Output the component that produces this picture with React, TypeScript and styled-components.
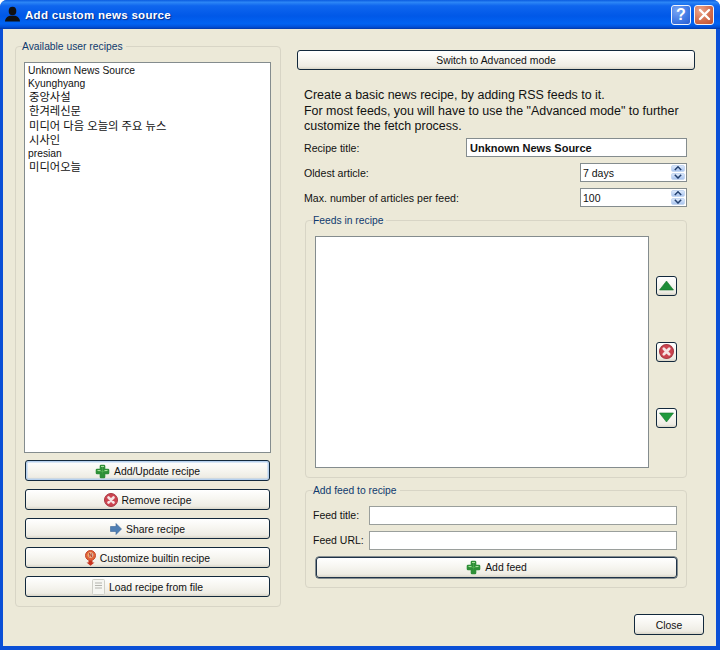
import React from "react";
import styled, { createGlobalStyle } from "styled-components";

const GlobalStyle = createGlobalStyle`
  html, body { margin: 0; padding: 0; background: #fff; }
  body { font-family: "Liberation Sans", Arial, sans-serif; font-size: 10.5px; color: #111; }
  * { box-sizing: border-box; }
`;

const Window = styled.div`
  width: 720px;
  height: 650px;
  display: flex;
  flex-direction: column;
  background: #0a4fd6;
  border-radius: 7px 7px 0 0;
  overflow: hidden;
`;

const TitleBar = styled.div`
  height: 29px;
  flex: none;
  display: flex;
  align-items: center;
  padding: 0 6px 0 4px;
  background: linear-gradient(180deg, #0a5be0 0%, #2c86f6 8%, #0f66ee 20%, #0058e8 55%, #0163f2 82%, #0150d8 93%, #0239a8 100%);
`;

const TitleText = styled.span`
  margin-left: 4px;
  flex: 1;
  color: #fff;
  font-weight: 700;
  font-size: 11.5px;
  letter-spacing: 0.3px;
  text-shadow: 1px 1px 1px #0b2f88;
`;

const CaptionButton = styled.div<{ $close?: boolean }>`
  width: 20px;
  height: 20px;
  margin-left: 3px;
  display: flex;
  align-items: center;
  justify-content: center;
  border: 1px solid #f2f5fc;
  border-radius: 3px;
  background: ${(p) =>
    p.$close
      ? "radial-gradient(circle at 30% 25%, #eda58c, #d06a4a 60%, #bf5030)"
      : "radial-gradient(circle at 30% 25%, #7aa6f4, #3f78e4 60%, #2a5cd0)"};
`;

const HelpMark = styled.span`
  color: #fff;
  font-size: 16px;
  font-weight: 700;
  line-height: 1;
`;

const Client = styled.div`
  flex: 1;
  margin: 0 4px 4px 3px;
  padding: 11px 12px 11px 12px;
  background: #ece9d8;
  display: grid;
  grid-template-columns: 266px 1fr;
  column-gap: 16px;
  min-height: 0;
`;

const Group = styled.fieldset<{ $height?: number; $left?: number }>`
  margin: 0;
  min-width: 0;
  padding: 9px 9px 9px ${(p) => p.$left ?? 8}px;
  border: 1px solid #d8d5c6;
  border-radius: 4px;
  display: flex;
  flex-direction: column;
  ${(p) => (p.$height ? `height: ${p.$height}px; flex: none;` : "")}
`;

const Legend = styled.legend<{ $offset?: number }>`
  padding: 0 3px 0 0;
  margin-left: ${(p) => p.$offset ?? -2}px;
  height: 13px;
  line-height: 13px;
  color: #0f3a6e;
  font-size: 10.3px;
`;

const LeftGroup = styled(Group)`
  margin-bottom: 28px;
`;

const ListBox = styled.div`
  flex: 1;
  min-width: 0;
  background: #fff;
  border: 1px solid #848c8e;
  padding: 1px 3px;
`;

const ListItem = styled.div<{ $ko?: boolean }>`
  height: ${(p) => (p.$ko ? 14.3 : 13)}px;
  line-height: ${(p) => (p.$ko ? 14.3 : 13)}px;
  padding-left: ${(p) => (p.$ko ? 1 : 0)}px;
  font-family: "Liberation Sans", "Noto Sans CJK KR", sans-serif;
  font-size: ${(p) => (p.$ko ? 11.3 : 10.3)}px;
  white-space: nowrap;
`;

const LeftButtons = styled.div`
  display: flex;
  flex-direction: column;
  gap: 8px;
  margin: 7px 1px 0;
`;

const Button = styled.button<{ $focus?: boolean; $strong?: boolean }>`
  height: 21px;
  padding: 1px 0 0;
  display: flex;
  align-items: center;
  justify-content: center;
  gap: 4px;
  font-family: inherit;
  font-size: 10.4px;
  color: #111;
  border: 1px solid ${(p) => (p.$strong ? "#1f3348" : "#12283c")};
  border-radius: 3px;
  background: linear-gradient(180deg, #ffffff 0%, #f7f6f1 45%, #eeece4 85%, #d9d5c8 100%);
  box-shadow: ${(p) =>
    p.$focus
      ? "inset 0 0 0 1.5px #b6d0ee"
      : p.$strong
        ? "0 0 0 0.5px #1f3348"
        : "none"};
`;

const RightColumn = styled.div`
  display: flex;
  flex-direction: column;
  padding-top: 10px;
  min-width: 0;
`;

const RightContent = styled.div`
  margin-right: 9px;
  display: flex;
  flex-direction: column;
`;

const SwitchButton = styled(Button)`
  height: 20px;
  padding: 0;
`;

const Intro = styled.div`
  margin: 18px 8px 3px 7px;
  font-size: 12.45px;
  line-height: 15.5px;
  white-space: nowrap;
`;

const FormRows = styled.div`
  display: flex;
  flex-direction: column;
  gap: 6px;
  margin: 0 8px 0 7px;
`;

const FormRow = styled.div`
  height: 19px;
  display: flex;
  align-items: center;
  justify-content: space-between;
  font-size: 10.6px;
`;

const FormLabel = styled.span`
  padding-top: 1px;
`;

const TitleInput = styled.div`
  width: 221px;
  height: 19px;
  padding-left: 3px;
  line-height: 18px;
  background: #fff;
  border: 1px solid #848c8e;
  font-size: 11px;
  font-weight: 700;
`;

const SpinBox = styled.div`
  width: 107px;
  height: 19px;
  display: flex;
  align-items: center;
  justify-content: space-between;
  padding: 1px 1px 1px 2px;
  background: #fff;
  border: 1px solid #848c8e;
  font-size: 10.5px;
`;

const SpinValue = styled.span`
  margin-top: 1px;
`;

const SpinArrows = styled.div`
  width: 14px;
  height: 100%;
  display: flex;
  flex-direction: column;
  gap: 1px;
`;

const SpinArrow = styled.div`
  flex: 1;
  display: flex;
  align-items: center;
  justify-content: center;
  border-radius: 2px;
  background: linear-gradient(180deg, #dbe8fb, #a9c4ee);
  border: 1px solid #c6d8f2;
`;

const RightGroups = styled.div`
  display: flex;
  flex-direction: column;
  gap: 6px;
  margin: 7px 8px 0 8px;
`;

const FeedsBody = styled.div`
  height: 232px;
  display: flex;
  gap: 7px;
`;

const MoveColumn = styled.div`
  width: 21px;
  display: flex;
  flex-direction: column;
  justify-content: center;
  gap: 46px;
`;

const IconButton = styled(Button)`
  width: 21px;
  height: 20px;
  flex: none;
  padding: 0;
`;

const FeedField = styled.div`
  display: flex;
  align-items: center;
  height: 19px;
  margin-bottom: 6px;
  font-size: 10.5px;
`;

const FeedLabel = styled.span`
  width: 56px;
  flex: none;
`;

const FeedInput = styled.div`
  flex: 1;
  height: 19px;
  background: #fff;
  border: 1px solid #9a9f9c;
`;

const AddFeedButton = styled(Button)`
  margin: 1px 0 0 3px;
`;

const CloseButton = styled(Button)`
  width: 70px;
  margin-top: auto;
  align-self: flex-end;
`;

const PlusIcon = () => (
  <svg width="15" height="15" viewBox="0 0 15 15">
    <defs>
      <linearGradient id="plusFill" x1="0" y1="0" x2="0" y2="1">
        <stop offset="0" stopColor="#7ccc70" />
        <stop offset="1" stopColor="#1f8f2c" />
      </linearGradient>
    </defs>
    <path
      d="M6 2h3v4h4v3H9v4H6V9H2V6h4z"
      fill="url(#plusFill)"
      stroke="#2f8f38"
      strokeWidth="2.600"
      strokeLinejoin="round"
    />
    <path d="M6 2.500h3M2.500 6.500h3M9.500 6.500h3" stroke="#a8e09c" strokeWidth="1" />
  </svg>
);

const RemoveIcon = ({ size = 14 }: { size?: number }) => (
  <svg width={size} height={size} viewBox="0 0 14 14">
    <circle cx="7" cy="7" r="6.500" fill="#cc4450" stroke="#a83842" />
    <path d="M4.500 4.500l5 5M9.500 4.500l-5 5" stroke="#f6e4e4" strokeWidth="2.600" strokeLinecap="round" />
  </svg>
);

const ShareIcon = () => (
  <svg width="12" height="12" viewBox="0 0 12 12">
    <path d="M0.500 3.500h5.500V0.500L11.500 6 6 11.500v-3H0.500z" fill="#4f7fb4" stroke="#3a6699" strokeWidth="0.600" />
  </svg>
);

const CustomizeIcon = () => (
  <svg width="11" height="16" viewBox="0 0 11 16">
    <circle cx="5.500" cy="5.500" r="5" fill="#e0643a" stroke="#c4472a" />
    <circle cx="5.500" cy="5" r="2.800" fill="#f4c9a0" />
    <text x="5.500" y="7" fontSize="5.500" fontWeight="700" fontFamily="Liberation Sans" textAnchor="middle" fill="#a8321c">N</text>
    <path d="M3.500 10.500h4V12.500H9.500L5.500 15.800 1.500 12.500h2z" fill="#c8321e" />
  </svg>
);

const DocIcon = () => (
  <svg width="13" height="16" viewBox="0 0 13 16">
    <rect x="0.500" y="0.500" width="12" height="15" rx="1" fill="#f6f6f2" stroke="#cfcfc8" />
    <path d="M3 4h7M3 6.500h7M3 9h7" stroke="#b4b4ae" strokeWidth="1" />
  </svg>
);

const TriangleIcon = ({ down }: { down?: boolean }) => (
  <svg width="15" height="11" viewBox="0 0 15 11">
    <path
      d={down ? "M0.500 1h14L7.500 10z" : "M7.500 1l7 9H0.500z"}
      fill={down ? "#1f9a3c" : "#1d8c36"}
      stroke="#16752c"
      strokeWidth="0.600"
    />
  </svg>
);

const UserIcon = () => (
  <svg width="17" height="17" viewBox="0 0 17 17">
    <ellipse cx="8.500" cy="5" rx="3.800" ry="4.300" fill="#111" />
    <path d="M1 15.500c0-3.600 3-5.300 5-5.800h5c2 .5 5 2.200 5 5.800z" fill="#111" />
  </svg>
);

const CloseMark = () => (
  <svg width="13" height="13" viewBox="0 0 13 13">
    <path d="M2 2l9 9M11 2l-9 9" stroke="#fff" strokeWidth="2.400" strokeLinecap="round" />
  </svg>
);

const Chevron = ({ down }: { down?: boolean }) => (
  <svg width="8" height="5" viewBox="0 0 8 5">
    <path d={down ? "M0.800 0.800L4 4 7.200 0.800" : "M0.800 4L4 0.800 7.200 4"} fill="none" stroke="#23406f" strokeWidth="1.500" />
  </svg>
);

const Spin = ({ value }: { value: string }) => (
  <SpinBox>
    <SpinValue>{value}</SpinValue>
    <SpinArrows>
      <SpinArrow>
        <Chevron />
      </SpinArrow>
      <SpinArrow>
        <Chevron down />
      </SpinArrow>
    </SpinArrows>
  </SpinBox>
);

const recipes = [
  { name: "Unknown News Source" },
  { name: "Kyunghyang" },
  { name: "중앙사설", ko: true },
  { name: "한겨레신문", ko: true },
  { name: "미디어 다음 오늘의 주요 뉴스", ko: true },
  { name: "시사인", ko: true },
  { name: "presian" },
  { name: "미디어오늘", ko: true },
];

const App = () => {
  return (
    <>
      <GlobalStyle />
      <Window>
        <TitleBar>
          <UserIcon />
          <TitleText>Add custom news source</TitleText>
          <CaptionButton>
            <HelpMark>?</HelpMark>
          </CaptionButton>
          <CaptionButton $close>
            <CloseMark />
          </CaptionButton>
        </TitleBar>
        <Client>
          <LeftGroup>
            <Legend>Available user recipes</Legend>
            <ListBox>
              {recipes.map((r) => (
                <ListItem key={r.name} $ko={r.ko}>
                  {r.name}
                </ListItem>
              ))}
            </ListBox>
            <LeftButtons>
              <Button $focus>
                <PlusIcon />
                Add/Update recipe
              </Button>
              <Button>
                <RemoveIcon />
                Remove recipe
              </Button>
              <Button>
                <ShareIcon />
                Share recipe
              </Button>
              <Button>
                <CustomizeIcon />
                Customize builtin recipe
              </Button>
              <Button>
                <DocIcon />
                Load recipe from file
              </Button>
            </LeftButtons>
          </LeftGroup>
          <RightColumn>
            <RightContent>
              <SwitchButton>Switch to Advanced mode</SwitchButton>
              <Intro>
                Create a basic news recipe, by adding RSS feeds to it.
                <br />
                For most feeds, you will have to use the "Advanced mode" to further
                <br />
                customize the fetch process.
              </Intro>
              <FormRows>
                <FormRow>
                  <FormLabel>Recipe title:</FormLabel>
                  <TitleInput>Unknown News Source</TitleInput>
                </FormRow>
                <FormRow>
                  <FormLabel>Oldest article:</FormLabel>
                  <Spin value="7 days" />
                </FormRow>
                <FormRow>
                  <FormLabel>Max. number of articles per feed:</FormLabel>
                  <Spin value="100" />
                </FormRow>
              </FormRows>
              <RightGroups>
                <Group $height={264} $left={9}>
                  <Legend>Feeds in recipe</Legend>
                  <FeedsBody>
                    <ListBox />
                    <MoveColumn>
                      <IconButton>
                        <TriangleIcon />
                      </IconButton>
                      <IconButton>
                        <RemoveIcon size={15} />
                      </IconButton>
                      <IconButton>
                        <TriangleIcon down />
                      </IconButton>
                    </MoveColumn>
                  </FeedsBody>
                </Group>
                <Group $height={104} $left={7}>
                  <Legend $offset={0}>Add feed to recipe</Legend>
                  <FeedField>
                    <FeedLabel>Feed title:</FeedLabel>
                    <FeedInput />
                  </FeedField>
                  <FeedField>
                    <FeedLabel>Feed URL:</FeedLabel>
                    <FeedInput />
                  </FeedField>
                  <AddFeedButton $strong>
                    <PlusIcon />
                    Add feed
                  </AddFeedButton>
                </Group>
              </RightGroups>
            </RightContent>
            <CloseButton>Close</CloseButton>
          </RightColumn>
        </Client>
      </Window>
    </>
  );
};

export default App;
